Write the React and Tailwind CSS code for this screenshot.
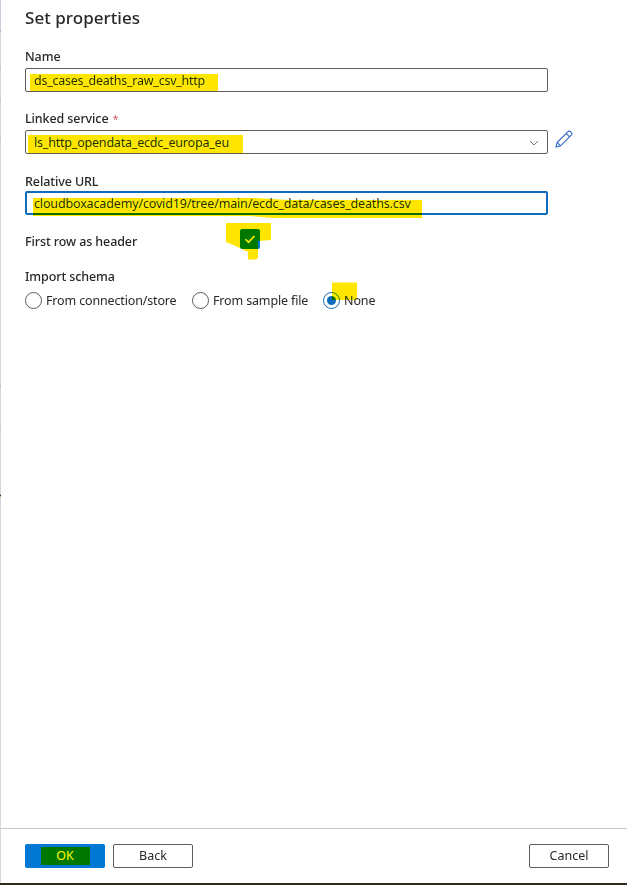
function Highlight({ className, points }) {
  return (
    <svg className={`pointer-events-none absolute mix-blend-darken ${className}`} aria-hidden="true">
      <polygon points={points} fill="#ffe600" />
    </svg>
  );
}

function Label({ children, required }) {
  return (
    <div className="h-5 pt-px text-[12.5px] leading-5 font-medium tracking-[-0.1px] text-[#292827]">
      {children}
      {required && <span className="ml-1 text-[11px] font-normal text-[#d0656b]">*</span>}
    </div>
  );
}

function Radio({ label, checked, className }) {
  return (
    <div className={`flex items-center ${className}`}>
      <span
        className={`flex size-[17px] shrink-0 items-center justify-center rounded-full border ${
          checked ? "border-[#0f6cbd]" : "border-[#5b5a58]"
        }`}
      >
        {checked && <span className="size-[9px] rounded-full bg-[#0f6cbd]" />}
      </span>
      <span className="ml-1 pt-0.5 text-[12.5px] leading-5 whitespace-nowrap">{label}</span>
    </div>
  );
}

function EdgeStrip() {
  return (
    <div className="flex w-px shrink-0 flex-col bg-[#d6d6d6]">
      <div className="h-[31px] bg-[#c9cedd]" />
      <div className="h-px bg-[#a9a9b5]" />
      <div className="mt-9 h-px bg-[#b5b5b5]" />
      <div className="mt-[31px] h-px bg-[#b5b5b5]" />
      <div className="mt-9 h-px bg-[#b5b5b5]" />
      <div className="mt-[247px] h-0.5 bg-[#b9b9b9]" />
      <div className="mt-[39px] h-px bg-[#b9b9b9]" />
      <div className="mt-[67px] h-px bg-[#68b7e8]" />
      <div className="h-px bg-[#2b2b2b]" />
      <div className="h-px bg-[#e5a25a]" />
    </div>
  );
}

export default function App() {
  return (
    <div className="flex h-[885px] w-[627px] flex-col overflow-hidden bg-white font-['Noto_Sans','Open_Sans',sans-serif] text-[12.5px] text-[#292827]">
      <div className="flex min-h-0 flex-1">
        <EdgeStrip />
        <div className="flex min-w-0 flex-1 flex-col">
          <main className="flex-1 pl-6">
            <h1 className="h-[46px] pt-1.5 text-[17px] leading-6 font-medium tracking-[0.05px]">Set properties</h1>

            <Label>Name</Label>
            <div className="relative mt-0.5 flex h-6 w-[523px] items-center rounded-xs border border-[#605e5c] bg-white pl-2">
              <span className="pt-0.5 tracking-[-0.25px]">ds_cases_deaths_raw_csv_http</span>
              <Highlight className="top-[5px] left-1 h-[18px] w-[190px]" points="0,0 188,0 188,17 0,17" />
            </div>

            <div className="mt-4">
              <Label required>Linked service</Label>
            </div>
            <div className="mt-0.5 flex h-6 items-center">
              <div className="relative flex h-6 w-[523px] items-center justify-between rounded-xs border border-[#605e5c] bg-white pr-2 pl-2">
                <span className="pt-0.5 tracking-[-0.2px]">ls_http_opendata_ecdc_europa_eu</span>
                <svg className="mt-0.5 h-2.5 w-2.5" viewBox="0 0 10 10" fill="none" stroke="#7a7876">
                  <path d="M1 3l4 4 4-4" />
                </svg>
                <Highlight className="top-1 left-0.5 h-[19px] w-[216px]" points="0,0 215,0 215,18 0,18" />
              </div>
              <svg className="-mt-1.5 ml-[7px] h-[18px] w-[18px]" viewBox="0 0 18 18" fill="none" stroke="#2f68c5" strokeWidth="1.1">
                <path d="M1 17l1.2-4.6L12.8 1.8a2 2 0 0 1 2.8 0l.6.6a2 2 0 0 1 0 2.8L5.6 15.8z" />
                <path d="M11.2 3.4l3.4 3.4M2.2 12.4l3.4 3.4" />
              </svg>
            </div>

            <div className="mt-[17px]">
              <Label>Relative URL</Label>
            </div>
            <div className="relative flex h-6 w-[523px] items-center rounded-xs border-2 border-[#0f6cbd] bg-white pl-[7px]">
              <span className="pt-0.5 tracking-[-0.15px]">cloudboxacademy/covid19/tree/main/ecdc_data/cases_deaths.csv</span>
              <Highlight
                className="top-[5px] left-1.5 h-[22px] w-[391px]"
                points="0,0 223,0 255,2 389,2 389,20 240,20 217,18 0,18"
              />
            </div>

            <div className="relative mt-3.5 flex h-5 items-center">
              <div className="w-[215px] pt-[3px] tracking-[-0.15px]">
                <Label>First row as header</Label>
              </div>
              <span className="flex size-5 items-center justify-center rounded-xs bg-[#0078d4]">
                <svg className="size-3" viewBox="0 0 12 12" fill="none" stroke="white" strokeWidth="1.6">
                  <path d="M1.5 6.3l3 3L10.5 3" />
                </svg>
              </span>
              <Highlight
                className="-top-1.5 left-[201px] h-[38px] w-[46px]"
                points="0,0 45,0 45,17 32,18 32,35 30,36.5 22,36.5 22,29 14,25 0,19"
              />
            </div>

            <div className="mt-[17px]">
              <Label>Import schema</Label>
            </div>
            <div className="relative mt-1 flex h-5 items-center">
              <Radio label="From connection/store" className="w-[167px] tracking-[-0.15px]" />
              <Radio label="From sample file" className="w-[131px] tracking-[-0.15px]" />
              <Radio label="None" checked className="tracking-[-0.1px]" />
              <Highlight className="-top-2 left-[307px] h-[18px] w-[26px]" points="0,0.5 25,0.5 25,18 0,18" />
            </div>
          </main>

          <footer className="flex h-[55px] items-start gap-2 border-t border-[#c8c8c8] pt-[15px] pr-[18px] pl-6">
            <button className="relative h-6 w-20 rounded-xs bg-[#0078d4] pt-px text-white">
              OK
              <Highlight className="top-[3px] left-4 h-[18px] w-[50px]" points="0,0 49,0 49,18 0,18" />
            </button>
            <button className="h-6 w-20 rounded-xs border border-[#605e5c] bg-white pt-px">Back</button>
            <button className="ml-auto h-6 w-20 rounded-xs border border-[#605e5c] bg-white pt-px">Cancel</button>
          </footer>
        </div>
      </div>
      <div className="h-0.5 shrink-0 bg-[#302a23]" />
    </div>
  );
}
